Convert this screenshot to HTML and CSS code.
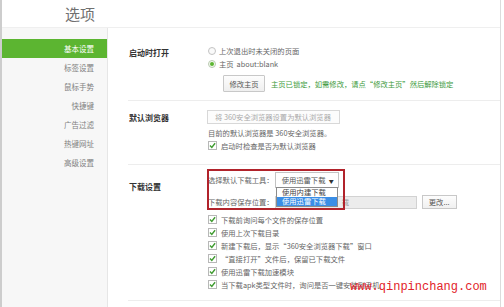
FILE: index.html
```html
<!DOCTYPE html>
<html lang="zh-CN">
<head>
<meta charset="utf-8">
<title>选项</title>
<link rel="stylesheet" href="styles.css">
</head>
<body>
<div class="window">
  <header class="top"><h1 class="title">选项</h1></header>
  <div class="body">
    <nav class="side">
      <div class="nav-item active">基本设置</div>
      <div class="nav-item">标签设置</div>
      <div class="nav-item">鼠标手势</div>
      <div class="nav-item">快捷键</div>
      <div class="nav-item">广告过滤</div>
      <div class="nav-item">热键网址</div>
      <div class="nav-item">高级设置</div>
    </nav>
    <main class="main">
      <section class="sec sec-start">
        <div class="label">启动时打开</div>
        <div class="content">
          <div class="row"><svg class="radio" viewBox="0 0 8 8"><circle cx="4" cy="4" r="3.5" fill="#fafafa" stroke="#c2c2c2"/></svg>上次退出时未关闭的页面</div>
          <div class="row"><svg class="radio" viewBox="0 0 8 8"><circle cx="4" cy="4" r="3.5" fill="#f4faf0" stroke="#b9c9b0"/><circle cx="4" cy="4" r="2" fill="#5cb531"/></svg>主页<span class="url">about:blank</span></div>
          <div class="btn-row"><button class="btn">修改主页</button><span class="note">主页已锁定，如需修改，请点“修改主页”然后解除锁定</span></div>
        </div>
      </section>
      <section class="sec sec-browser">
        <div class="label">默认浏览器</div>
        <div class="content">
          <button class="btn-wide">将 360安全浏览器设置为默认浏览器</button>
          <div class="row row-gap">目前的默认浏览器是 360安全浏览器。</div>
          <div class="row"><svg class="check" viewBox="0 0 9 9"><rect x="0.5" y="0.5" width="8" height="8" fill="#fff" stroke="#b8b8b8"/><path d="M2 4.6 L3.8 6.5 L7.1 2.3" fill="none" stroke="#3f9b30" stroke-width="1.4"/></svg>启动时检查是否为默认浏览器</div>
        </div>
      </section>
      <section class="sec sec-download">
        <div class="label">下载设置</div>
        <div class="content">
          <div class="drow">选择默认下载工具：<div class="select"><span>使用迅雷下载</span><span class="caret">▼</span></div></div>
          <div class="drow drow2">下载内容保存位置：<div class="path"><span class="path-text">载</span></div><button class="btn-small">更改...</button></div>
          <div class="row first"><svg class="check" viewBox="0 0 9 9"><rect x="0.5" y="0.5" width="8" height="8" fill="#fff" stroke="#b8b8b8"/><path d="M2 4.6 L3.8 6.5 L7.1 2.3" fill="none" stroke="#3f9b30" stroke-width="1.4"/></svg>下载前询问每个文件的保存位置</div>
          <div class="row"><svg class="check" viewBox="0 0 9 9"><rect x="0.5" y="0.5" width="8" height="8" fill="#fff" stroke="#b8b8b8"/><path d="M2 4.6 L3.8 6.5 L7.1 2.3" fill="none" stroke="#3f9b30" stroke-width="1.4"/></svg>使用上次下载目录</div>
          <div class="row"><svg class="check" viewBox="0 0 9 9"><rect x="0.5" y="0.5" width="8" height="8" fill="#fff" stroke="#b8b8b8"/><path d="M2 4.6 L3.8 6.5 L7.1 2.3" fill="none" stroke="#3f9b30" stroke-width="1.4"/></svg>新建下载后，显示“360安全浏览器下载”窗口</div>
          <div class="row"><svg class="check" viewBox="0 0 9 9"><rect x="0.5" y="0.5" width="8" height="8" fill="#fff" stroke="#b8b8b8"/><path d="M2 4.6 L3.8 6.5 L7.1 2.3" fill="none" stroke="#3f9b30" stroke-width="1.4"/></svg>“直接打开”文件后，保留已下载文件</div>
          <div class="row"><svg class="check" viewBox="0 0 9 9"><rect x="0.5" y="0.5" width="8" height="8" fill="#fff" stroke="#b8b8b8"/><path d="M2 4.6 L3.8 6.5 L7.1 2.3" fill="none" stroke="#3f9b30" stroke-width="1.4"/></svg>使用迅雷下载加速模块</div>
          <div class="row"><svg class="check" viewBox="0 0 9 9"><rect x="0.5" y="0.5" width="8" height="8" fill="#fff" stroke="#b8b8b8"/><path d="M2 4.6 L3.8 6.5 L7.1 2.3" fill="none" stroke="#3f9b30" stroke-width="1.4"/></svg>当下载apk类型文件时，询问是否一键安装到手机</div>
        </div>
        <ul class="dropdown">
          <li class="opt">使用内建下载</li>
          <li class="opt selected">使用迅雷下载</li>
        </ul>
        <div class="redbox"></div>
      </section>
    </main>
  </div>
  <div class="watermark">www.qinpinchang.com</div>
</div>
</body>
</html>
```

FILE: styles.css
```css
* { box-sizing: border-box; margin: 0; padding: 0; }
html, body { width: 504px; height: 307px; overflow: hidden; background: #fff; }
body {
  font-family: "Noto Sans CJK SC", "Noto Sans", sans-serif;
  font-size: 7.3px;
  color: #666;
}
.window {
  position: relative;
  width: 501px;
  height: 307px;
  border-left: 2px solid #cdcdcd;
  border-right: 1px solid #dcdcdc;
  display: flex;
  flex-direction: column;
}
.top { height: 28px; flex: none; border-bottom: 1px solid #efefef; }
.title {
  font-size: 15px;
  font-weight: normal;
  color: #707070;
  line-height: 25px;
  padding: 1px 0 0 63px;
}
.body { flex: 1; display: flex; min-height: 0; }
.side {
  width: 106px;
  flex: none;
  background: #f7f7f7;
  border-right: 1px solid #e6e6e6;
  padding-top: 11px;
}
.nav-item {
  height: 19px;
  line-height: 19px;
  text-align: right;
  padding-right: 13px;
  color: #808080;
  font-size: 7.5px;
}
.nav-item.active { background: #5cb531; color: #fff; }

.main { flex: 1; padding-left: 20px; }
.sec { position: relative; display: flex; border-bottom: 1px solid #ededed; }
.label {
  width: 79px;
  flex: none;
  font-size: 8px;
  font-weight: bold;
  color: #333;
  line-height: 13px;
  padding-left: 1px;
}
.content { flex: 1; padding-left: 1px; }
.row { display: flex; align-items: center; height: 13px; white-space: nowrap; }
.radio { width: 8px; height: 8px; margin-right: 3px; flex: none; }
.check { width: 9px; height: 9px; margin-right: 4px; flex: none; }
.url { margin-left: 3px; }

.sec-start { padding: 16px 0 8px; }
.sec-start .label { padding-top: 2px; }
.btn-row { display: flex; align-items: center; margin-top: 5px; padding-left: 15px; height: 17px; white-space: nowrap; }
.btn {
  height: 17px;
  width: 42px;
  border: 1px solid #c8c8c8;
  border-radius: 1px;
  background: linear-gradient(#fdfdfd, #efefef);
  font: inherit;
  color: #555;
}
.note { margin-left: 6px; color: #3c9a3c; }

.sec-browser { padding: 9px 0 12px; }
.sec-browser .label { padding-top: 1px; }
.btn-wide {
  display: block;
  margin-left: -1px;
  height: 14px;
  width: 133px;
  border: 1px solid #d8d8d8;
  background: #fcfcfc;
  color: #aaa;
  font: inherit;
  text-align: left;
  padding-left: 7px;
}
.row-gap { margin-top: 2px; }

.sec-download { padding: 7px 0 9px; }
.sec-download .label { padding-top: 8px; }
.drow { display: flex; align-items: center; height: 16px; white-space: nowrap; }
.drow2 { margin-top: 6px; }
.select {
  margin-left: 1px;
  width: 64px;
  height: 16px;
  border: 1px solid #c3c3c3;
  background: #fff;
  color: #555;
  display: flex;
  align-items: center;
  justify-content: space-between;
  padding: 0 4px 0 6px;
}
.caret { font-size: 5px; color: #333; }
.path {
  margin-left: 1px;
  width: 142px;
  height: 13px;
  line-height: 11px;
  border: 1px solid #d2d2d2;
  background: #ececec;
  color: #999;
  padding-left: 66px;
  overflow: hidden;
}
.btn-small {
  margin-left: 5px;
  width: 35px;
  height: 14px;
  border: 1px solid #c8c8c8;
  background: linear-gradient(#fdfdfd, #f0f0f0);
  color: #555;
  font: inherit;
}
.first { margin-top: 3px; }

.dropdown {
  position: absolute;
  left: 148px;
  top: 22px;
  width: 62px;
  height: 20px;
  list-style: none;
  border: 1px solid #8c8c8c;
  background: #fff;
  z-index: 2;
}
.opt { height: 9px; line-height: 9px; padding-left: 5px; color: #444; white-space: nowrap; }
.opt.selected { background: #3a8ee6; color: #fff; }
.redbox {
  position: absolute;
  left: 79px;
  top: 4px;
  width: 138px;
  height: 41px;
  border: 2px solid #b1232b;
  z-index: 3;
}
.watermark {
  position: absolute;
  left: 348px;
  top: 280px;
  font-family: "Liberation Mono", monospace;
  font-size: 12px;
  line-height: 14px;
  color: #e2232a;
  white-space: nowrap;
  z-index: 5;
}
```
